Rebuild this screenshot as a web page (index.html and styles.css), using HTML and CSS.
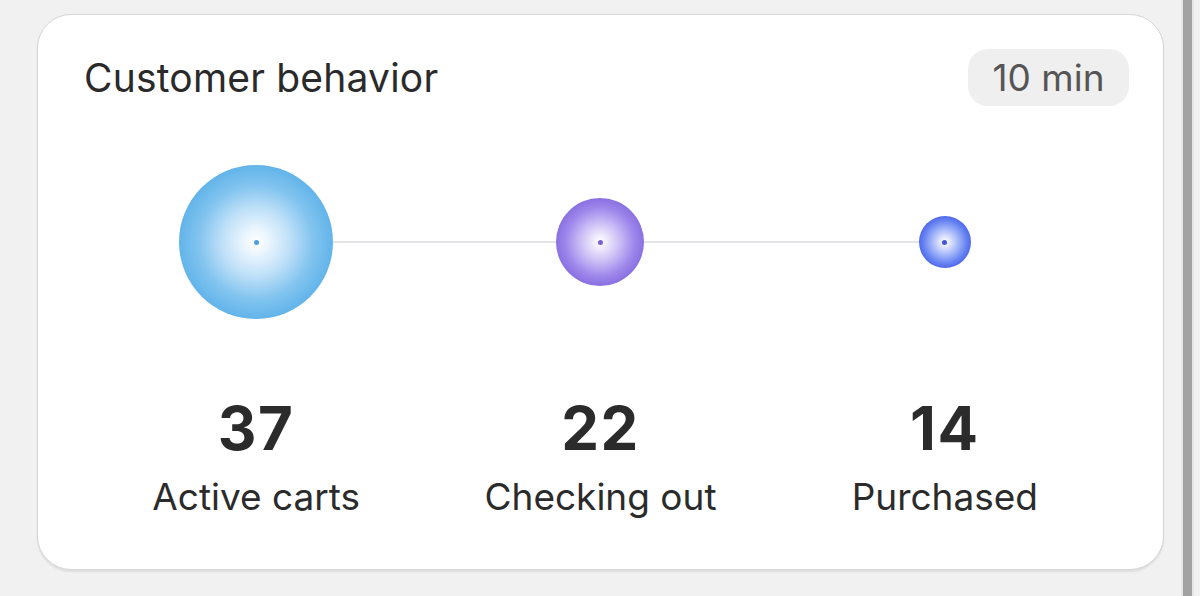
FILE: index.html
```html
<!DOCTYPE html>
<html lang="en">
<head>
<meta charset="utf-8">
<title>Customer behavior</title>
<link rel="stylesheet" href="styles.css">
</head>
<body>
<div class="page">
  <section class="card">
    <header class="card-head">
      <h2 class="title">Customer behavior</h2>
      <span class="pill">10 min</span>
    </header>
    <div class="flow">
      <div class="node"><span class="bubble bubble-lg"><i class="dot dot-blue"></i></span></div>
      <div class="node"><span class="bubble bubble-md"><i class="dot dot-purple"></i></span></div>
      <div class="node"><span class="bubble bubble-sm"><i class="dot dot-indigo"></i></span></div>
    </div>
    <div class="stats">
      <div class="stat"><div class="num">37</div><div class="label">Active carts</div></div>
      <div class="stat"><div class="num">22</div><div class="label">Checking out</div></div>
      <div class="stat"><div class="num">14</div><div class="label">Purchased</div></div>
    </div>
  </section>
  <div class="rail"></div>
</div>
</body>
</html>
```
FILE: styles.css
```css
* { box-sizing: border-box; }
html, body { margin: 0; padding: 0; }
body {
  background: #f1f1f1;
  font-family: Inter, "Noto Sans", "Liberation Sans", sans-serif;
  color: #2b2b2b;
  width: 1200px;
  height: 596px;
  overflow: hidden;
}
.page {
  display: flex;
  align-items: flex-start;
  height: 596px;
  padding: 14px 0 0 37px;
}
.card {
  width: 1127px;
  height: 556px;
  background: #fff;
  border: 1.5px solid #d6d6d6;
  border-radius: 34px;
  box-shadow: 0 2px 2px rgba(0,0,0,0.08);
  padding: 34px 46px 0 46px;
  display: flex;
  flex-direction: column;
}
.card-head {
  display: flex;
  align-items: center;
  justify-content: space-between;
  height: 57px;
}
.title {
  margin: 0;
  font-size: 39px;
  line-height: 46px;
  font-weight: 400;
  letter-spacing: 0.2px;
  color: #2a2a2a;
}
.pill {
  height: 57px;
  width: 161px;
  margin-right: -12px;
  border-radius: 20px;
  background: #efefef;
  color: #555;
  font-size: 37px;
  display: flex;
  align-items: center;
  justify-content: center;
}
.flow {
  position: relative;
  display: grid;
  grid-template-columns: repeat(3, 1fr);
  height: 160px;
  margin-top: 56px;
}
.flow::before {
  content: "";
  position: absolute;
  left: 172px;
  right: 172px;
  top: 79px;
  height: 2px;
  background: #e4e4e8;
}
.node {
  display: flex;
  align-items: center;
  justify-content: center;
  position: relative;
}
.bubble {
  border-radius: 50%;
  display: flex;
  align-items: center;
  justify-content: center;
  position: relative;
}
.bubble-lg {
  width: 154px; height: 154px;
  background: radial-gradient(circle closest-side, #ffffff 0%, #eef7fe 14%, #bfe0f8 44%, #82c4ef 74%, #62b4ea 100%);
}
.bubble-md {
  width: 88px; height: 88px;
  background: radial-gradient(circle closest-side, #ffffff 0%, #f1edfd 14%, #c9bbf5 46%, #9e87eb 78%, #8a70e2 100%);
}
.bubble-sm {
  width: 52px; height: 52px;
  background: radial-gradient(circle closest-side, #ffffff 0%, #e3e8fe 18%, #9cb0f8 54%, #6480f1 84%, #4f69ec 100%);
}
.dot {
  display: block;
  width: 5px; height: 5px;
  border-radius: 50%;
}
.dot-blue { background: #4b9ee0; }
.dot-purple { background: #7a5fd6; }
.dot-indigo { background: #3f57d8; }
.stats {
  display: grid;
  grid-template-columns: repeat(3, 1fr);
  margin-top: 76px;
}
.stat {
  display: flex;
  flex-direction: column;
  align-items: center;
}
.num {
  font-size: 60px;
  line-height: 60px;
  font-weight: 700;
  color: #2b2b2b;
  letter-spacing: 1.5px;
}
.label {
  margin-top: 18px;
  font-size: 37px;
  line-height: 42px;
  color: #2b2b2b;
}
.rail {
  position: absolute;
  top: 0;
  left: 1181px;
  width: 13px;
  height: 596px;
  border-left: 2px solid #e6e6e6;
  border-right: 2px solid #e6e6e6;
  background: #a2a2a2;
}
```
